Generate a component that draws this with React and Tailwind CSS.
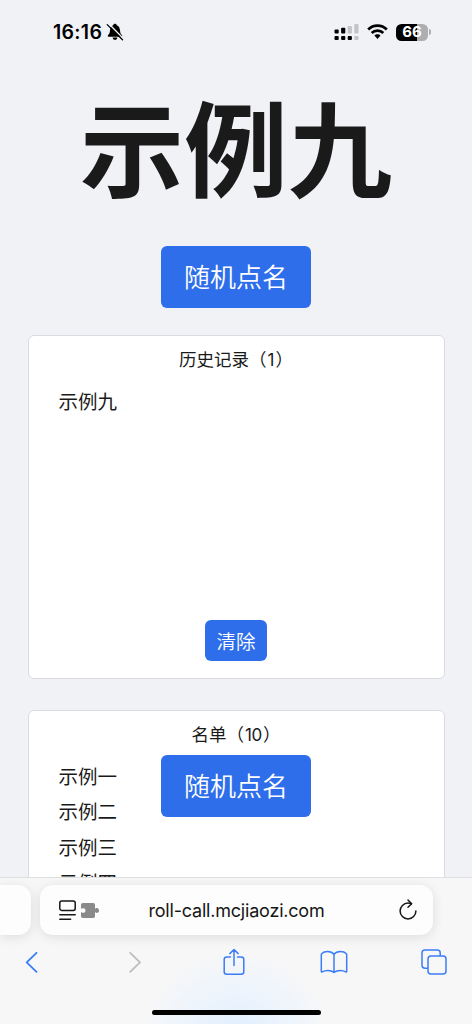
const items = ['示例一', '示例二', '示例三', '示例四'];

function StatusBar() {
  return (
    <header className="flex h-16 shrink-0 items-center justify-between pl-[53px] pr-[41px] text-black">
      <div className="flex items-center gap-[3px]">
        <span className="w-[50px] font-['Inter'] text-[19.5px] leading-6 font-semibold tracking-[0.3px]">16:16</span>
        <svg width="18" height="18" viewBox="0 0 18 18">
          <path d="M9 .8c-.9 0-1.6.6-1.7 1.4C5 3 4.200 5 4 7.300c-.2 2.900-.8 3.800-2 5-.5.600-.3 1.400.5 1.400h13c.8 0 1-.8.5-1.400-1.200-1.200-1.800-2.100-2-5-.2-2.300-1-4.300-3.300-5.100C10.600 1.400 9.900.8 9 .8Z" />
          <path d="M6.600 14.600h4.800A2.400 2.400 0 0 1 6.600 14.600Z" />
          <path d="M2.600 .6 17.300 15.400" stroke="#f1f2f6" strokeWidth="1.400" />
          <path d="M1.200 1.600 16.500 16.800" stroke="#000" strokeWidth="1.300" strokeLinecap="round" />
        </svg>
      </div>
      <div className="flex items-center">
        <svg width="25" height="18" viewBox="0 0 25 18">
          <g fill="#000">
            <rect x="0.500" y="6.500" width="4.200" height="4" rx="1" />
            <rect x="7.100" y="4.800" width="4.200" height="5.700" rx="1" />
            <rect x="0.500" y="13" width="4.200" height="4" rx="1" />
            <rect x="7.100" y="13" width="4.200" height="4" rx="1" />
            <rect x="13.700" y="13" width="4.200" height="4" rx="1" />
          </g>
          <g fill="#c3c4c8">
            <rect x="13.700" y="3" width="4.200" height="7.500" rx="1" />
            <rect x="20.300" y="1" width="4.200" height="9.500" rx="1" />
            <rect x="20.300" y="13" width="4.200" height="4" rx="1" />
          </g>
        </svg>
        <svg className="ml-2" width="21" height="16" viewBox="0 0 21 16" fill="none" stroke="#000" strokeWidth="2.800">
          <path d="M1.200 5.400a13.200 13.200 0 0 1 18.600 0" />
          <path d="M4.700 9a8.300 8.300 0 0 1 11.600 0" />
          <path d="M10.500 10.300c1.200 0 2.300.5 3.100 1.300l-3.100 3.400-3.100-3.400c.8-.8 1.900-1.300 3.100-1.300Z" fill="#000" stroke="none" />
        </svg>
        <div className="ml-2 flex items-center gap-px">
          <div className="flex h-[17px] w-[32px] items-center justify-center rounded-[5.500px] bg-[linear-gradient(to_right,#000_66%,#adaeb1_66%)]">
            <span className="font-['Inter'] text-[15px] leading-4 font-bold text-white">66</span>
          </div>
          <div className="h-[6px] w-[2px] rounded-r-full bg-[#adaeb1]" />
        </div>
      </div>
    </header>
  );
}

function RollButton() {
  return (
    <button className="h-[62px] w-[150px] shrink-0 rounded-[6px] bg-[#2e6eea] pb-[3px] text-[26px] leading-[38px] font-[350] text-white">
      随机点名
    </button>
  );
}

function Toolbar() {
  return (
    <footer className="relative flex h-[147px] shrink-0 flex-col border-t border-[#dedfe1] bg-[#f7f7f8] bg-[radial-gradient(circle_at_50%_115%,#dcecff_0,#eaf3fd_45px,#f7f7f800_95px)] text-[#3b7df6]">
      <div className="flex w-[472px] gap-[9px] overflow-hidden pt-[7px] pb-[13px]">
        <div className="h-[50px] w-[31px] shrink-0 rounded-r-[13px] bg-[#fdfdfd] shadow-[0_2px_12px_#0000001c]" />
        <div className="flex h-[50px] w-[393px] shrink-0 items-center rounded-[13px] bg-[#fdfdfd] pr-[16px] pl-[19px] text-[#161616] shadow-[0_2px_12px_#0000001c]">
          <svg width="17" height="21" viewBox="0 0 17 21" fill="none" stroke="currentColor" strokeWidth="1.500" strokeLinecap="round">
            <rect x=".8" y="1" width="15.400" height="9.400" rx="1.900" />
            <path d="M.8 14.800h15.400M.8 19.300h10.800" />
          </svg>
          <svg className="ml-[5px]" width="18" height="15" viewBox="0 0 18 15" fill="#8a8a8b">
            <path d="M2 0h10.200C13.400 0 14 .7 14 2v3.700c.6 0 .9-.6 1.900-.6 1.200 0 2.100 1 2.100 2.400s-.9 2.400-2.100 2.400c-1 0-1.300-.6-1.900-.6V13c0 1.300-.6 2-1.800 2H2c-1.300 0-2-.7-2-2V9.200c.7 0 1 .6 2.200.6 1.300 0 2.300-.9 2.300-2.300s-1-2.300-2.300-2.300C1 5.200.7 5.800 0 5.800V2C0 .7.700 0 2 0Z" />
          </svg>
          <span className="flex-1 pt-px pr-[25px] text-center font-['Inter'] text-[18px] leading-6 tracking-[-0.2px]">roll-call.mcjiaozi.com</span>
          <svg width="18" height="22" viewBox="0 0 18 22" fill="none" stroke="currentColor" strokeWidth="1.500" strokeLinecap="round" strokeLinejoin="round">
            <path d="M12.300 4.700C11.400 4.300 10.200 4.100 9 4.100a7.900 7.900 0 1 0 7.900 7.900" />
            <path d="m9 1 3.700 3.700L9 8.200" />
          </svg>
        </div>
      </div>
      <div className="flex h-[28px] items-center pl-[25px]">
        <svg width="14" height="22" viewBox="0 0 14 22" fill="none" stroke="currentColor" strokeWidth="1.800" strokeLinecap="round" strokeLinejoin="round"><path d="M11.500 1.800 1.700 11.300l9.800 9.500" /></svg>
        <svg className="ml-[88.500px]" width="14" height="22" viewBox="0 0 14 22" fill="none" stroke="#bcbdbf" strokeWidth="1.800" strokeLinecap="round" strokeLinejoin="round"><path d="m2.200 1.800 9.800 9.500-9.800 9.500" /></svg>
        <svg className="ml-[81.500px]" width="22" height="28" viewBox="0 0 22 28" fill="none" stroke="currentColor" strokeWidth="1.500" strokeLinecap="round" strokeLinejoin="round">
          <path d="M7.500 9H3.800C2 9 1.200 9.900 1.200 11.500v12.200c0 1.700.8 2.500 2.600 2.500h14.400c1.800 0 2.600-.8 2.600-2.500V11.500C20.800 9.900 20 9 18.200 9h-3.700M11 17.500V1.500M6.800 5.600 11 1.500l4.200 4.100" />
        </svg>
        <svg className="ml-[75px]" width="28" height="24" viewBox="0 0 28 24" fill="none" stroke="currentColor" strokeWidth="1.500" strokeLinecap="round" strokeLinejoin="round">
          <path d="M14 4.300C12.500 2.400 10.300 1.500 7.700 1.500S3 2.300 1.800 3.600c-.4.400-.5.700-.5 1.200v16.500c0 .7.300 1 .9.600C3.800 20.900 5.600 20.400 7.700 20.400c2.600 0 4.600.6 6.300 2 1.700-1.400 3.700-2 6.300-2 2.100 0 3.900.5 5.500 1.500.6.400.9.100.9-.6V4.800c0-.5-.1-.8-.5-1.200-1.200-1.300-3.300-2.100-5.900-2.100S15.500 2.400 14 4.300Zm0 0v18.100" />
        </svg>
        <svg className="ml-[73px]" width="26" height="26" viewBox="0 0 26 26" fill="none" stroke="currentColor" strokeWidth="1.500">
          <path d="M7 19.200H3.900c-1.900 0-2.900-1-2.900-2.900V3.900C1 2 2 1 3.900 1h12.400c1.900 0 2.900 1 2.900 2.900V7" />
          <rect x="7" y="7" width="18" height="18" rx="3" />
        </svg>
      </div>
      <div className="mt-auto mb-[9px] h-[5px] w-[169px] self-center rounded-full bg-black" />
    </footer>
  );
}

export default function App() {
  return (
    <div lang="zh-CN" className="relative flex h-[1024px] w-[472px] flex-col overflow-hidden bg-[#f1f2f6] font-['Noto_Sans_CJK_SC',sans-serif] text-[#1a1a1a]">
      <StatusBar />
      <main className="flex min-h-0 flex-1 flex-col items-center overflow-hidden">
        <h1 className="h-[182px] shrink-0 text-[104px] leading-[161px] font-bold">示例九</h1>
        <RollButton />
        <section className="mt-[27px] flex h-[344px] w-[417px] shrink-0 flex-col items-center rounded-[6px] border border-[#d9dce2] bg-white">
          <h2 className="mt-[10px] text-[17.500px] leading-[26px]">历史记录（<span className="px-[1px] font-['Inter'] text-[17px]">1</span>）</h2>
          <ul className="mt-[10px] w-full flex-1 pl-[30px] text-[19.500px] leading-[35.300px]">
            <li>示例九</li>
          </ul>
          <button className="mb-[17px] h-[41px] w-[62px] rounded-[6px] bg-[#2e6eea] text-[19.500px] leading-7 font-[350] text-white">清除</button>
        </section>
        <section className="mt-[31px] flex h-[344px] w-[417px] shrink-0 flex-col items-center rounded-[6px] border border-[#d9dce2] bg-white">
          <h2 className="mt-[10px] text-[17.500px] leading-[26px]">名单（<span className="px-[1px] font-['Inter'] text-[17px] tracking-[-0.4px]">10</span>）</h2>
          <ul className="mt-[10px] w-full pl-[30px] text-[19.500px] leading-[35.300px]">
            {items.map((name) => <li key={name}>{name}</li>)}
          </ul>
        </section>
      </main>
      <Toolbar />
      <div className="absolute top-[755px] left-[161px] flex">
        <RollButton />
      </div>
    </div>
  );
}
